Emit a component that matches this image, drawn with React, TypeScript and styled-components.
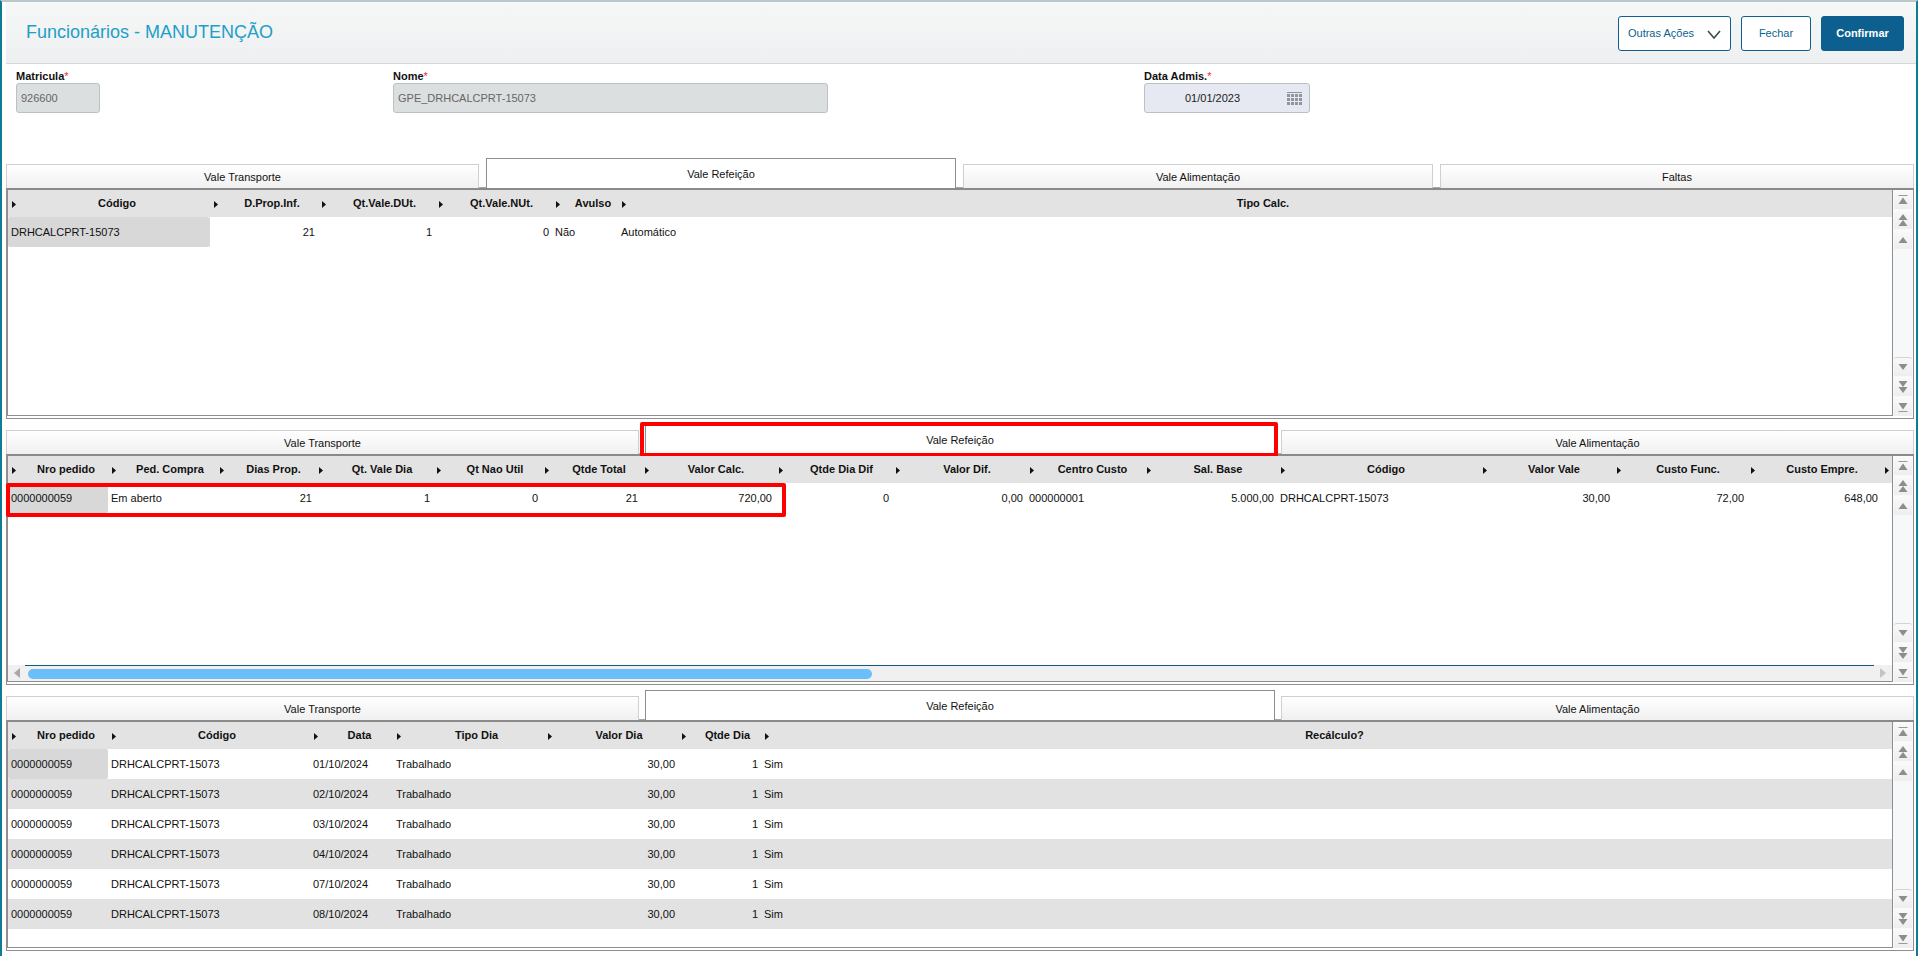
import React from "react";
import styled, { createGlobalStyle } from "styled-components";

const Global = createGlobalStyle`
  html, body { margin: 0; padding: 0; background: #fff; }
  body { font-family: "Liberation Sans", Arial, sans-serif; font-size: 11px; color: #000; }
  * { box-sizing: border-box; }
`;

const Page = styled.div`
  width: 1918px; height: 956px; overflow: hidden; background: #fff;
  border-top: 2px solid #bcc7cd;
  border-left: 2px solid #0f7c93;
  border-right: 2px solid #0f7c93;
  padding-left: 4px;
`;
const Header = styled.header`
  height: 62px; display: flex; align-items: flex-start; justify-content: space-between;
  padding: 14px 12px 0 20px;
  background: linear-gradient(#f6f7f7, #eeeff0);
  border-bottom: 1px solid #d6d9d9;
`;
const Title = styled.h1`
  margin: 0; font-size: 18px; font-weight: 400; line-height: 32px; color: #1d9fc8;
`;
const Actions = styled.div`display: flex; gap: 10px;`;
const ActionButton = styled.button<{ $w: number; $primary?: boolean }>`
  width: ${p => p.$w}px; height: 35px; border-radius: 3px; padding: 0 0 1px;
  border: 1px solid #0c5f8e;
  background: ${p => (p.$primary ? "#0c5f8e" : "#fff")};
  color: ${p => (p.$primary ? "#fff" : "#0c5f8e")};
  font: ${p => (p.$primary ? 700 : 400)} 11px "Liberation Sans", Arial, sans-serif;
  display: flex; align-items: center; justify-content: center; gap: 13px;
`;
const Chevron = styled.svg`margin-top: 3px; flex: none;`;
const FormRow = styled.section`
  height: 94px; padding: 6px 0 0 10px;
  display: grid; grid-template-columns: 377px 751px 1fr; align-items: start;
`;
const Field = styled.div`display: flex; flex-direction: column;`;
const Label = styled.label`
  font-weight: 700; line-height: 13px; height: 13px; color: #111;
  & > span { color: #f22; font-weight: 400; }
`;
const InputBox = styled.div<{ $w: number; $date?: boolean }>`
  width: ${p => p.$w}px; height: 30px; border-radius: 3px; display: flex; align-items: center;
  border: 1px solid #b9c1c1;
  background: ${p => (p.$date ? "#e6e9f1" : "#dcdfdf")};
  color: ${p => (p.$date ? "#222" : "#666")};
  padding-left: ${p => (p.$date ? 0 : 4)}px;
`;
const DateValue = styled.span`flex: 1; text-align: center;`;
const CalendarSvg = styled.svg`margin: 0 7px 0 7px; flex: none;`;

const Panel = styled.section<{ $first?: boolean }>`
  margin: ${p => (p.$first ? 0 : 5)}px 2px 0 0;
`;
const TabStrip = styled.div<{ $cols: string; $gap: number }>`
  height: 30px; display: grid; grid-template-columns: ${p => p.$cols}; column-gap: ${p => p.$gap}px; align-items: end;
  background: linear-gradient(#a8a8a8, #a8a8a8) bottom / 100% 1px no-repeat;
`;
const Tab = styled.div<{ $active?: boolean }>`
  position: relative;
  height: ${p => (p.$active ? 30 : 24)}px;
  display: flex; align-items: center; justify-content: center; color: #111;
  border: 1px solid ${p => (p.$active ? "#8d8d8d" : "#cfcfcf")};
  border-bottom: 0;
  background: ${p => (p.$active ? "#fff" : "linear-gradient(#fff, #f0f0f0)")};
`;
const TabHighlight = styled.div`
  position: absolute; left: -6px; right: -4px; top: -3px; bottom: -3px;
  border: 4px solid #f00; border-radius: 2px;
`;
const Frame = styled.div`
  height: 231px; display: flex; padding-bottom: 2px;
  border: 1px solid #8f8f8f; border-top: 2px solid #8a8a8a;
`;
const TableArea = styled.div`
  position: relative; flex: 1; min-width: 0; display: flex; flex-direction: column;
  border: 1px solid #8f8f8f; border-top: 0;
`;
const TableBody = styled.div`flex: 1; min-height: 0;`;
const Row = styled.div<{ $cols: string; $alt?: boolean }>`
  display: grid; grid-template-columns: ${p => p.$cols}; height: 30px; align-items: stretch;
  background: ${p => (p.$alt ? "#e2e2e2" : "#fff")};
`;
const HeadRow = styled(Row)`height: 27px; background: #e3e3e3;`;
const HeadCell = styled.div`
  display: flex; align-items: center; padding-left: 4px; font-weight: 700; color: #111; min-width: 0;
`;
const HeadLabel = styled.span`flex: 1; text-align: center; margin-left: 8px; white-space: nowrap; padding-bottom: 1px;`;
const ArrowSvg = styled.svg`flex: none; margin-top: 2px;`;
const Cell = styled.div<{ $right?: boolean; $key?: boolean }>`
  display: flex; align-items: center; white-space: nowrap; color: #111;
  justify-content: ${p => (p.$right ? "flex-end" : "flex-start")};
  padding: ${p => (p.$right ? "0 3px 0 0" : "0 0 0 3px")};
  background: ${p => (p.$key ? "#d8d8d8" : "transparent")};
  border-radius: ${p => (p.$key ? 2 : 0)}px;
`;
const RowHighlight = styled.div`
  position: absolute; left: -2px; top: 27px; width: 780px; height: 34px;
  border: 4px solid #f00; border-radius: 2px;
`;
const HScroll = styled.div`height: 16px; display: flex; background: #f0f0f0; flex: none;`;
const HArrow = styled.div<{ $w: number }>`
  width: ${p => p.$w}px; flex: none; display: flex; align-items: center; justify-content: center;
`;
const HTrack = styled.div`flex: 1; border-top: 1px solid #14597f; padding: 3px 0 0 3px;`;
const HThumb = styled.div`width: 844px; height: 10px; border-radius: 5px; background: #6abffb;`;
const VScroll = styled.div`
  width: 20px; flex: none; background: #f7f8fa; display: flex; flex-direction: column; justify-content: space-between;
`;
const VGroup = styled.div`display: flex; flex-direction: column; gap: 1px;`;
const VButton = styled.div<{ $cap?: boolean }>`
  height: 19px; width: 18px; margin-left: 1px; display: flex; align-items: center; justify-content: center;
  background: linear-gradient(#f9f9f9, #eeeeee);
  border-top: 1px solid ${p => (p.$cap ? "#d4d4d4" : "#fbfbfb")};
  border-radius: ${p => (p.$cap ? "3px 3px 0 0" : 0)};
`;

const SortArrow = () => (
  <ArrowSvg width="4" height="7" viewBox="0 0 4 7">
    <path d="M0 0 L4 3.5 L0 7 Z" fill="#111" />
  </ArrowSvg>
);
const VIcon = ({ kind, down }: { kind: "end" | "double" | "single"; down?: boolean }) => (
  <svg width="12" height="14" viewBox="0 0 12 14" style={down ? { transform: "scaleY(-1)" } : undefined}>
    {kind === "end" && (
      <>
        <rect x="1.5" y="2" width="9" height="1" fill="#9a9a9a" />
        <path d="M6 4.5 L10.5 11 L1.5 11 Z" fill="#8d8d8d" />
      </>
    )}
    {kind === "double" && (
      <>
        <path d="M6 1 L10.5 7 L1.5 7 Z" fill="#8d8d8d" />
        <path d="M6 7 L10.5 13 L1.5 13 Z" fill="#8d8d8d" />
      </>
    )}
    {kind === "single" && <path d="M6 4 L10.5 10 L1.5 10 Z" fill="#8d8d8d" />}
  </svg>
);
const VBar = () => (
  <VScroll>
    <VGroup>
      <VButton><VIcon kind="end" /></VButton>
      <VButton><VIcon kind="double" /></VButton>
      <VButton><VIcon kind="single" /></VButton>
    </VGroup>
    <VGroup>
      <VButton $cap><VIcon kind="single" down /></VButton>
      <VButton><VIcon kind="double" down /></VButton>
      <VButton><VIcon kind="end" down /></VButton>
    </VGroup>
  </VScroll>
);
const Calendar = () => (
  <CalendarSvg width="15" height="13" viewBox="0 0 15 13">
    <rect x="0" y="0" width="15" height="1" fill="#8f96a0" />
    {[2, 6, 10].map(y =>
      [0, 4, 8, 12].map(x => <rect key={`${x}-${y}`} x={x} y={y} width="3" height="3" fill="#8f96a0" />)
    )}
  </CalendarSvg>
);

type CellDef = { t: string; r?: boolean };
const l = (t: string): CellDef => ({ t });
const r = (t: string): CellDef => ({ t, r: true });

const cols1 = ["Código", "D.Prop.Inf.", "Qt.Vale.DUt.", "Qt.Vale.NUt.", "Avulso", "Tipo Calc."];
const tmpl1 = "202px 108px 117px 117px 66px 1fr";
const rows1 = [[l("DRHCALCPRT-15073"), r("21"), r("1"), r("0"), l("Não"), l("Automático")]];

const cols2 = ["Nro pedido", "Ped. Compra", "Dias Prop.", "Qt. Vale Dia", "Qt Nao Util", "Qtde Total", "Valor Calc.", "Qtde Dia Dif", "Valor Dif.", "Centro Custo", "Sal. Base", "Código", "Valor Vale", "Custo Func.", "Custo Empre.", ""];
const tmpl2 = "100px 108px 99px 118px 108px 100px 134px 117px 134px 117px 134px 202px 134px 134px 134px 1fr";
const rows2 = [[l("0000000059"), l("Em aberto"), r("21"), r("1"), r("0"), r("21"), r("720,00"), r("0"), r("0,00"), l("000000001"), r("5.000,00"), l("DRHCALCPRT-15073"), r("30,00"), r("72,00"), r("648,00")]];

const cols3 = ["Nro pedido", "Código", "Data", "Tipo Dia", "Valor Dia", "Qtde Dia", "Recálculo?"];
const tmpl3 = "100px 202px 83px 151px 134px 83px 1fr";
const rows3 = ["01", "02", "03", "04", "07", "08"].map(d => [
  l("0000000059"), l("DRHCALCPRT-15073"), l(`${d}/10/2024`), l("Trabalhado"), r("30,00"), r("1"), l("Sim"),
]);

const DataGrid = ({ cols, tmpl, rows, hscroll, highlight }: {
  cols: string[]; tmpl: string; rows: CellDef[][]; hscroll?: boolean; highlight?: boolean;
}) => (
  <Frame>
    <TableArea>
      <HeadRow $cols={tmpl}>
        {cols.map((c, i) => (
          <HeadCell key={i}><SortArrow /><HeadLabel>{c}</HeadLabel></HeadCell>
        ))}
      </HeadRow>
      <TableBody>
        {rows.map((row, ri) => (
          <Row key={ri} $cols={tmpl} $alt={ri % 2 === 1}>
            {row.map((c, ci) => (
              <Cell key={ci} $right={c.r} $key={ri === 0 && ci === 0}>{c.t}</Cell>
            ))}
          </Row>
        ))}
      </TableBody>
      {hscroll && (
        <HScroll>
          <HArrow $w={17}>
            <svg width="6" height="10" viewBox="0 0 6 10"><path d="M6 0 L0 5 L6 10 Z" fill="#a8a8a8" /></svg>
          </HArrow>
          <HTrack><HThumb /></HTrack>
          <HArrow $w={18}>
            <svg width="6" height="10" viewBox="0 0 6 10"><path d="M0 0 L6 5 L0 10 Z" fill="#c4c4c4" /></svg>
          </HArrow>
        </HScroll>
      )}
      {highlight && <RowHighlight />}
    </TableArea>
    <VBar />
  </Frame>
);

export default function App() {
  return (
    <>
      <Global />
      <Page>
        <Header>
          <Title>Funcionários - MANUTENÇÃO</Title>
          <Actions>
            <ActionButton $w={113}>
              Outras Ações
              <Chevron width="14" height="9" viewBox="0 0 14 9"><path d="M1 1 L7 8 L13 1" fill="none" stroke="#3c4a52" strokeWidth="1.6" /></Chevron>
            </ActionButton>
            <ActionButton $w={70}>Fechar</ActionButton>
            <ActionButton $w={83} $primary>Confirmar</ActionButton>
          </Actions>
        </Header>
        <FormRow>
          <Field>
            <Label>Matricula<span>*</span></Label>
            <InputBox $w={84}>926600</InputBox>
          </Field>
          <Field>
            <Label>Nome<span>*</span></Label>
            <InputBox $w={435}>GPE_DRHCALCPRT-15073</InputBox>
          </Field>
          <Field>
            <Label>Data Admis.<span>*</span></Label>
            <InputBox $w={166} $date>
              <DateValue>01/01/2023</DateValue>
              <Calendar />
            </InputBox>
          </Field>
        </FormRow>

        <Panel $first>
          <TabStrip $cols="473px 470px 470px 1fr" $gap={7}>
            <Tab>Vale Transporte</Tab>
            <Tab $active>Vale Refeição</Tab>
            <Tab>Vale Alimentação</Tab>
            <Tab>Faltas</Tab>
          </TabStrip>
          <DataGrid cols={cols1} tmpl={tmpl1} rows={rows1} />
        </Panel>

        <Panel>
          <TabStrip $cols="633px 630px 1fr" $gap={6}>
            <Tab>Vale Transporte</Tab>
            <Tab $active>Vale Refeição<TabHighlight /></Tab>
            <Tab>Vale Alimentação</Tab>
          </TabStrip>
          <DataGrid cols={cols2} tmpl={tmpl2} rows={rows2} hscroll highlight />
        </Panel>

        <Panel>
          <TabStrip $cols="633px 630px 1fr" $gap={6}>
            <Tab>Vale Transporte</Tab>
            <Tab $active>Vale Refeição</Tab>
            <Tab>Vale Alimentação</Tab>
          </TabStrip>
          <DataGrid cols={cols3} tmpl={tmpl3} rows={rows3} />
        </Panel>
      </Page>
    </>
  );
}
